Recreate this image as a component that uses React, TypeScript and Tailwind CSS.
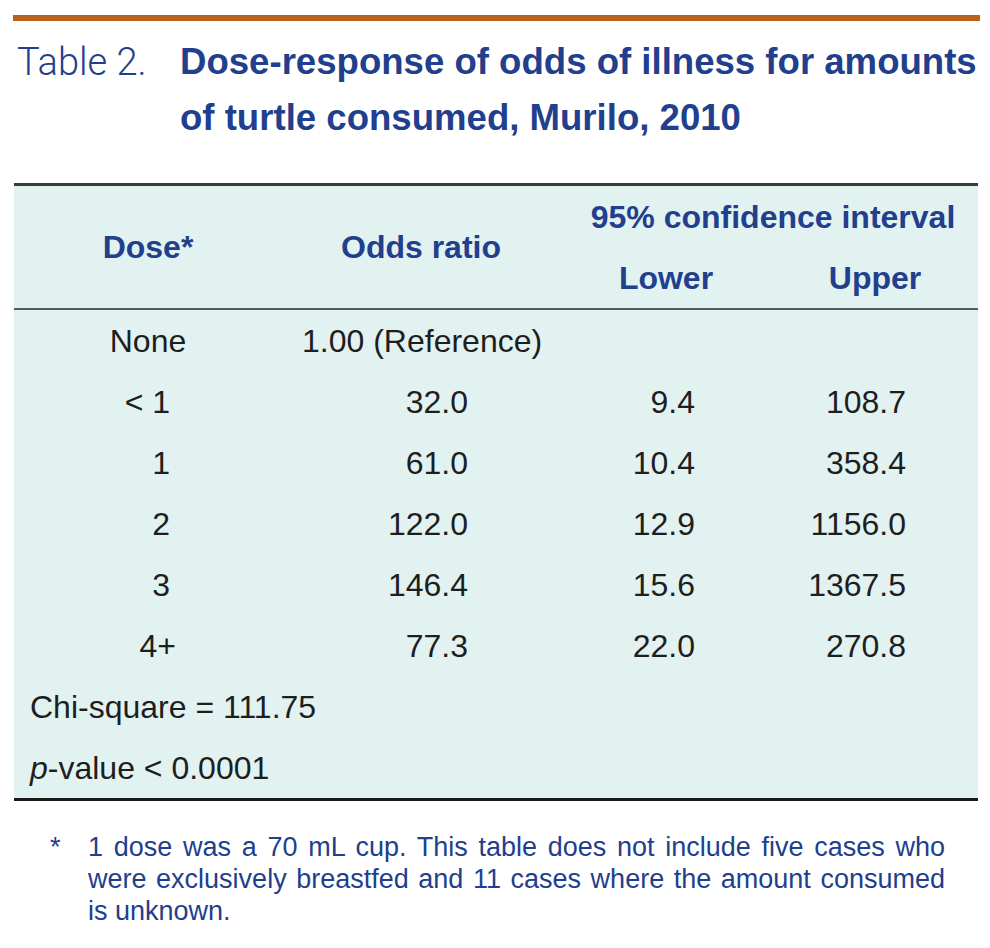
const BLUE = "text-[#213f8d]";

const ROWS: { dose: string; odds: string; lower: string; upper: string }[] = [
  { dose: "< 1", odds: "32.0", lower: "9.4", upper: "108.7" },
  { dose: "1", odds: "61.0", lower: "10.4", upper: "358.4" },
  { dose: "2", odds: "122.0", lower: "12.9", upper: "1156.0" },
  { dose: "3", odds: "146.4", lower: "15.6", upper: "1367.5" },
  { dose: "4+", odds: "77.3", lower: "22.0", upper: "270.8" },
];

const GRID = "grid grid-cols-[276px_270px_200px_218px]";
const JUSTIFIED = "text-justify [text-align-last:justify]";

export default function App() {
  return (
    <div className="h-[948px] w-[990px] bg-white font-['Liberation_Sans',Arial,sans-serif]">
      <div className="pt-[15px] pl-[13px] pr-[10px]">
        <div className="h-[6px] bg-[#b8621b]" />
      </div>

      {/* Caption */}
      <div className={`flex pt-[13px] pl-[17px] ${BLUE}`}>
        <div className="w-[163px] shrink-0 font-['Roboto',sans-serif] text-[38px] font-light leading-[56px]">
          Table 2.
        </div>
        <div className="text-[36.6px] font-bold leading-[56px]">
          Dose-response of odds of illness for amounts
          <br />
          of turtle consumed, Murilo, 2010
        </div>
      </div>

      {/* Table */}
      <div className="mt-[37px] ml-[14px] w-[964px] border-t-[3px] border-b-[3px] border-t-[#3a3a3a] border-b-[#1a1a1a] bg-[#e1f2f1] text-[32px] text-[#1e1e1e]">
        <div className={`${GRID} border-b-2 border-[#5a5a5a] font-bold ${BLUE}`}>
          <div className="row-span-2 flex items-center justify-center pr-2">Dose*</div>
          <div className="row-span-2 flex items-center justify-center pr-2">Odds ratio</div>
          <div className="col-span-2 flex h-[61px] items-center justify-center pl-2">
            95% confidence interval
          </div>
          <div className="flex h-[61px] items-center justify-center pl-3">Lower</div>
          <div className="flex h-[61px] items-center justify-center pl-3">Upper</div>
        </div>

        <div className={`${GRID} h-[61px] items-center`}>
          <div className="pr-2 text-center">None</div>
          <div className="pl-[12px]">1.00 (Reference)</div>
          <div />
          <div />
        </div>

        {ROWS.map((r) => (
          <div key={r.dose} className={`${GRID} h-[61px] items-center`}>
            <div className={r.dose === "4+" ? "pr-[114px] text-right" : "pr-[120px] text-right"}>
              {r.dose}
            </div>
            <div className="pr-[92px] text-right">{r.odds}</div>
            <div className="pr-[65px] text-right">{r.lower}</div>
            <div className="pr-[72px] text-right">{r.upper}</div>
          </div>
        ))}

        <div className="flex h-[61px] items-center pl-[16px]">Chi-square = 111.75</div>
        <div className="flex h-[61px] items-center pl-[16px]">
          <span className="italic">p</span>-value &lt; 0.0001
        </div>
      </div>

      {/* Footnote */}
      <div className={`mt-[30px] flex pl-[50px] pr-[45px] text-[27px] leading-[32px] ${BLUE}`}>
        <div className="w-[38px] shrink-0">*</div>
        <div className="flex-1">
          <div className={JUSTIFIED}>
            1 dose was a 70 mL cup. This table does not include five cases who
          </div>
          <div className={JUSTIFIED}>
            were exclusively breastfed and 11 cases where the amount consumed
          </div>
          <div>is unknown.</div>
        </div>
      </div>
    </div>
  );
}
